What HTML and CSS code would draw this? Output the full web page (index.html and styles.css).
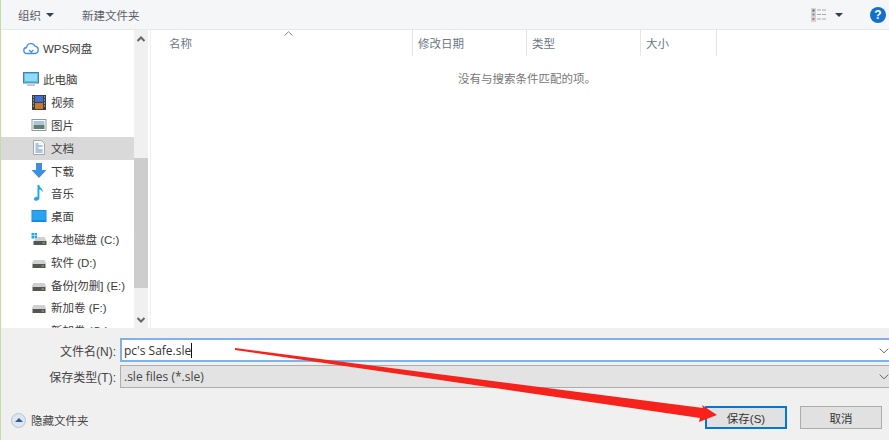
FILE: index.html
```html
<!DOCTYPE html>
<html lang="zh">
<head>
<meta charset="utf-8">
<title>保存</title>
<link rel="stylesheet" href="styles.css">
</head>
<body>
<div class="dialog">
  <header class="toolbar">
    <span class="tool">组织<i class="caret"></i></span>
    <span class="tool new-folder">新建文件夹</span>
    <span class="spacer"></span>
    <svg class="view-icon" width="16" height="14" viewBox="0 0 16 14">
      <rect x="0" y="0" width="5" height="14" fill="#d4d4d4"/>
      <rect x="1.500" y="1.500" width="2" height="2" fill="#666"/>
      <rect x="1.500" y="5.500" width="2" height="2" fill="#6a8fd8"/>
      <rect x="1.500" y="10" width="2" height="2" fill="#d66"/>
      <path d="M6 2h4M11 2h4M6 6.500h4M11 6.500h4M6 11h4M11 11h4" stroke="#aaa" stroke-width="1.200"/>
    </svg>
    <i class="caret view-caret"></i>
    <span class="help">?</span>
  </header>
  <main class="browser">
    <nav class="sidebar">
      <div class="tree">
        <div class="row top wps">
          <svg class="ic" width="16" height="14" viewBox="0 0 16 14"><path d="M4 12.500a3 3 0 0 1-.4-6A4.400 4.400 0 0 1 12 5.200a3.700 3.700 0 0 1 .3 7.300zM6 9l2.200 2 2.200-2" fill="#fff" stroke="#3f8fe8" stroke-width="1.300"/></svg>
          WPS网盘
        </div>
        <div class="row top pc">
          <svg class="ic" width="16" height="15" viewBox="0 0 16 15"><rect x="0.500" y="0.500" width="15" height="10.500" fill="#58bdf0" stroke="#5a7d96"/><rect x="2" y="2" width="12" height="7" fill="#8fdcf8"/><rect x="4" y="11" width="8" height="3" fill="#c2ccd2"/></svg>
          此电脑
        </div>
        <div class="row">
          <svg class="ic" width="14" height="15" viewBox="0 0 14 15"><rect width="14" height="15" fill="#3c3f42"/><rect x="3" y="1" width="8" height="6" fill="#3f6fd0"/><rect x="3" y="8" width="8" height="6" fill="#c8792c"/><path d="M1 2h1M1 5h1M1 8h1M1 11h1M12 2h1M12 5h1M12 8h1M12 11h1" stroke="#ddd"/></svg>
          视频
        </div>
        <div class="row">
          <svg class="ic" width="15" height="12" viewBox="0 0 15 12"><rect x="0.500" y="0.500" width="14" height="11" fill="#fff" stroke="#8d9aa5"/><rect x="2" y="2" width="11" height="4" fill="#a9c4de"/><rect x="2" y="6" width="11" height="4" fill="#5f7f66"/></svg>
          图片
        </div>
        <div class="row selected">
          <svg class="ic" width="12" height="15" viewBox="0 0 12 15"><path d="M.5.500h8l3 3v11H.500z" fill="#f8f8f8" stroke="#a8a8a8"/><path d="M2.500 4h3M2.500 6h7M2.500 8h3M2.500 10h7M2.500 12h7" stroke="#5b8fc9"/></svg>
          文档
        </div>
        <div class="row">
          <svg class="ic" width="15" height="15" viewBox="0 0 15 15"><path d="M4.500 0h6v7H15l-7.500 8L0 7h4.500z" fill="#3d8fe0"/></svg>
          下载
        </div>
        <div class="row">
          <svg class="ic" width="15" height="16" viewBox="0 0 15 16"><path d="M6 0h1.800c.4 3 4.200 3.600 3.400 7.500-.5-2-2-2.800-3.300-3V13c0 2-2.100 3-3.900 2.700-1.500-.3-2-1.700-1.200-2.700.9-1.200 2.800-1.500 3.200-.9z" fill="#1ea7f2"/></svg>
          音乐
        </div>
        <div class="row">
          <svg class="ic" width="15" height="12" viewBox="0 0 15 12"><rect width="15" height="12" fill="#1b86dc"/><rect x="0.800" y="0.800" width="13.400" height="9.400" fill="#27a5f0"/></svg>
          桌面
        </div>
        <div class="row">
          <svg class="ic" width="15" height="12" viewBox="0 0 15 12"><path d="M0 0h2.500v2.500H0zM3 0h2.500v2.500H3zM0 3h2.500v2.500H0zM3 3h2.500v2.500H3z" fill="#22a4ee"/><path d="M6 4h7l2 4H2z" fill="#d0d0d0"/><rect x="2" y="8" width="13" height="4" fill="#555"/><rect x="11" y="9.500" width="2.500" height="1" fill="#7fd06a"/></svg>
          本地磁盘 (C:)
        </div>
        <div class="row">
          <svg class="ic" width="15" height="12" viewBox="0 0 15 12"><path d="M2 4h11l2 4H0z" fill="#d0d0d0"/><rect y="8" width="13" height="4" x="1" fill="#555"/><rect x="10" y="9.500" width="2.500" height="1" fill="#7fd06a"/></svg>
          软件 (D:)
        </div>
        <div class="row">
          <svg class="ic" width="15" height="12" viewBox="0 0 15 12"><path d="M2 4h11l2 4H0z" fill="#d0d0d0"/><rect y="8" width="13" height="4" x="1" fill="#555"/><rect x="10" y="9.500" width="2.500" height="1" fill="#7fd06a"/></svg>
          备份[勿删] (E:)
        </div>
        <div class="row">
          <svg class="ic" width="15" height="12" viewBox="0 0 15 12"><path d="M2 4h11l2 4H0z" fill="#d0d0d0"/><rect y="8" width="13" height="4" x="1" fill="#555"/><rect x="10" y="9.500" width="2.500" height="1" fill="#7fd06a"/></svg>
          新加卷 (F:)
        </div>
        <div class="row">
          <svg class="ic" width="15" height="12" viewBox="0 0 15 12"><path d="M2 4h11l2 4H0z" fill="#d0d0d0"/><rect y="8" width="13" height="4" x="1" fill="#555"/></svg>
          新加卷 (G:)
        </div>
      </div>
      <div class="scrollbar">
        <svg class="sb-arrow" width="14" height="16" viewBox="0 0 14 16"><path d="M3.500 10 7 6.500 10.500 10" fill="none" stroke="#666" stroke-width="2"/></svg>
        <div class="thumb"></div>
        <svg class="sb-arrow" width="14" height="16" viewBox="0 0 14 16"><path d="M3.500 6 7 9.500 10.500 6" fill="none" stroke="#666" stroke-width="2"/></svg>
      </div>
    </nav>
    <section class="list">
      <div class="list-head">
        <div class="col name">名称
          <svg class="sort" width="9" height="5" viewBox="0 0 9 5"><path d="M.5 4.500 4.500.8l4 3.700" fill="none" stroke="#888"/></svg>
        </div>
        <div class="col date">修改日期</div>
        <div class="col type">类型</div>
        <div class="col size">大小</div>
      </div>
      <p class="empty">没有与搜索条件匹配的项。</p>
    </section>
  </main>
  <section class="form">
    <div class="field">
      <label class="lbl">文件名(N):</label>
      <div class="input">pc's Safe.sle<span class="cursor"></span>
        <svg class="chev" width="10" height="6" viewBox="0 0 10 6"><path d="M.7.700 5 4.800 9.300.700" fill="none" stroke="#666"/></svg>
      </div>
    </div>
    <div class="field second">
      <label class="lbl">保存类型(T):</label>
      <div class="select">.sle files (*.sle)
        <svg class="chev" width="10" height="6" viewBox="0 0 10 6"><path d="M.7.700 5 4.800 9.300.700" fill="none" stroke="#666"/></svg>
      </div>
    </div>
    <div class="actions">
      <span class="hide">
        <span class="hide-btn"><i class="up"></i></span>隐藏文件夹
      </span>
      <span class="spacer"></span>
      <button class="btn primary">保存(S)</button>
      <button class="btn">取消</button>
    </div>
  </section>
  <svg class="annotation" width="889" height="440" viewBox="0 0 889 440">
    <polygon points="235,348 703,408 702,405 717,415 699,422 700,418 235,350" fill="#f5231c"/>
  </svg>
</div>
</body>
</html>
```
FILE: styles.css
```css
* { box-sizing: border-box; }
html, body { margin: 0; padding: 0; }
body { width: 889px; height: 440px; overflow: hidden; background: #fff; font-family: "Liberation Sans", "Noto Sans CJK SC", sans-serif; font-size: 11.500px; color: #333; }
.dialog { position: relative; width: 889px; height: 440px; display: flex; flex-direction: column; border-left: 1px solid #c6dca8; }
.spacer { flex: 1; }

.toolbar { height: 30px; flex: none; display: flex; align-items: center; background: #f5f6f7; border-bottom: 1px solid #e6e8ea; padding: 0 0 0 17px; color: #5a6068; }
.tool { display: inline-flex; align-items: center; }
.caret { display: inline-block; width: 0; height: 0; margin-left: 5px; border-left: 4px solid transparent; border-right: 4px solid transparent; border-top: 4px solid #2d4259; }
.new-folder { margin-left: 28px; }
.view-icon { margin-right: 8px; }
.view-caret { margin: 0 27px 0 0; }
.help { width: 16px; height: 16px; border-radius: 50%; background: #1470c8; color: #fff; font-weight: 700; font-size: 12px; line-height: 16px; text-align: center; margin-right: 3px; }

.browser { height: 298px; flex: none; display: flex; overflow: hidden; }
.sidebar { width: 150px; flex: none; display: flex; border-right: 1px solid #f0f0f0; }
.tree { width: 133px; flex: none; padding-top: 7.500px; }
.row { height: 22.800px; display: flex; align-items: center; padding: 0 0 1px 30px; white-space: nowrap; color: #3c3c3c; }
.row .ic { width: 16px; flex: none; margin-right: 4px; }
.row.top { padding-left: 22px; }
.row.wps { height: 22px; margin-bottom: 9px; }
.row.selected { background: #d9d9d9; }
.scrollbar { width: 14px; flex: none; background: #f0f0f0; display: flex; flex-direction: column; }
.sb-arrow { flex: none; margin-top: 1px; }
.thumb { margin: 111px 0 0; flex: none; height: 130px; background: #cdcdcd; }
.sb-arrow:last-child { margin-top: 24px; }

.list { flex: 1; color: #6b7785; }
.list-head { display: flex; height: 26px; padding-bottom: 2px; }
.col { display: flex; align-items: center; padding-left: 6px; box-shadow: 1px 0 0 #e5e5e5; position: relative; height: 26px; }
.name { width: 261px; padding-left: 18px; }
.sort { position: absolute; top: 1px; left: 133px; }
.date { width: 114px; }
.type { width: 114px; }
.size { width: 76px; }
.empty { margin: 14px 0 0; text-align: center; padding-left: 14px; color: #777; }

.form { flex: 1; background: #f0f0f0; display: flex; flex-direction: column; padding-top: 10px; }
.field { display: flex; align-items: center; height: 24px; flex: none; font-size: 12px; }
.field.second { margin-top: 3px; height: 23px; }
.lbl { width: 115px; text-align: right; margin-right: 4px; color: #444; flex: none; }
.input { flex: 1; height: 24px; background: #fff; border: 1px solid #7eb4e4; border-width: 2px 0 2px 2px; font-family: "Open Sans", sans-serif; font-size: 12px; display: flex; align-items: center; padding-left: 2px; position: relative; color: #333; }
.cursor { display: inline-block; width: 1px; height: 15px; background: #111; }
.select { flex: 1; height: 23px; background: #e3e3e3; border: 1px solid #adadad; border-right: 0; font-family: "Open Sans", sans-serif; font-size: 12px; display: flex; align-items: center; padding-left: 3px; position: relative; color: #444; }
.chev { position: absolute; right: 0; top: 8px; }
.actions { display: flex; align-items: flex-start; margin-top: 18px; height: 23px; padding-left: 10px; padding-right: 7px; }
.hide { display: flex; align-items: center; color: #444; margin-top: 6px; }
.hide-btn { width: 15px; height: 15px; border-radius: 50%; background: #dfe6ef; border: 1px solid #b9c4d0; display: flex; align-items: center; justify-content: center; margin-right: 5px; }
.up { width: 0; height: 0; border-left: 4px solid transparent; border-right: 4px solid transparent; border-bottom: 4px solid #2d5a96; }
.btn { width: 82px; height: 23px; padding: 0; background: #e1e1e1; border: 1px solid #adadad; font: inherit; color: #333; margin-left: 13px; }
.btn.primary { border: 2px solid #0078d7; }

.annotation { position: absolute; top: 0; left: -1px; pointer-events: none; }
```
